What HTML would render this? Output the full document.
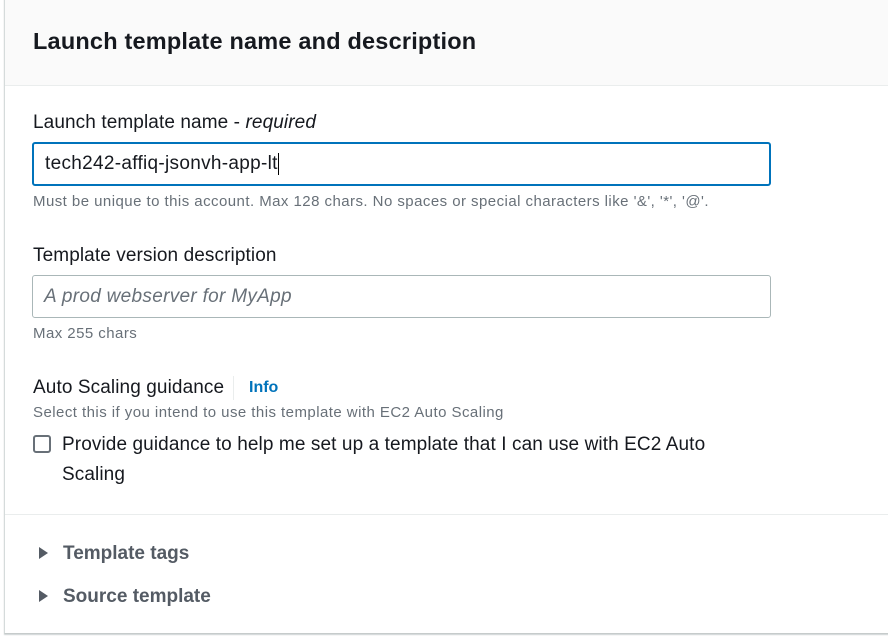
<!DOCTYPE html>
<html><head><style>
*{margin:0;padding:0;box-sizing:border-box}
body{width:888px;height:637px;background:#fff;font-family:"Liberation Sans",sans-serif;color:#16191f;position:relative;overflow:hidden}
.card{position:absolute;left:4px;top:-2px;width:890px;height:636px;border-left:1px solid #d5dbdb;border-bottom:1px solid #c6cbcb;box-shadow:0 1px 1px rgba(0,28,36,.2)}
.hdr{position:absolute;left:0;top:0;width:100%;height:88px;background:#fafafa;border-bottom:1px solid #eaeded}
.a{position:absolute;white-space:nowrap}
h1{position:absolute;left:28px;top:30px;font-size:23.5px;font-weight:bold;letter-spacing:.2px}
.lbl{font-size:19px;letter-spacing:.1px}
.help{font-size:15px;color:#687078;letter-spacing:.45px}
.inp{position:absolute;left:32px;width:739px;border-radius:3px;font-size:19px;letter-spacing:.3px;padding-left:11px}
.tri{position:absolute;width:0;height:0;border-top:6px solid transparent;border-bottom:6px solid transparent;border-left:9px solid #545b64}
.exp{font-size:19px;font-weight:bold;color:#545b64}
</style></head><body>
<div class="card">
<div class="hdr"><h1>Launch template name and description</h1></div>
<div class="a" style="left:0;top:516px;width:100%;border-top:1px solid #eaeded"></div>
</div>
<div class="a lbl" style="left:33px;top:112px">Launch template name - <i>required</i></div>
<div class="inp" style="top:142px;height:44px;border:2px solid #0073bb;line-height:40px">tech242-affiq-jsonvh-app-lt<span style="display:inline-block;width:1px;height:22px;background:#000;vertical-align:middle"></span></div>
<div class="a help" style="left:33px;top:193px">Must be unique to this account. Max 128 chars. No spaces or special characters like '&amp;', '*', '@'.</div>
<div class="a lbl" style="left:33px;top:245px">Template version description</div>
<div class="inp" style="top:275px;height:43px;border:1px solid #aab7b8;line-height:41px;color:#687078;font-style:italic">A prod webserver for MyApp</div>
<div class="a help" style="left:33px;top:325px">Max 255 chars</div>
<div class="a lbl" style="left:33px;top:377px">Auto Scaling guidance</div>
<div class="a" style="left:233px;top:376px;width:1px;height:24px;background:#eaeded"></div>
<div class="a" style="left:249px;top:379px;font-size:16px;font-weight:bold;color:#0073bb">Info</div>
<div class="a help" style="left:33px;top:404px">Select this if you intend to use this template with EC2 Auto Scaling</div>
<div class="a" style="left:33px;top:435px;width:18px;height:18px;border:2px solid #687078;border-radius:3px"></div>
<div class="a lbl" style="left:62px;top:430px;line-height:30px;white-space:normal;width:660px">Provide guidance to help me set up a template that I can use with EC2 Auto Scaling</div>
<div class="tri" style="left:39px;top:547px"></div>
<div class="a exp" style="left:63px;top:543px">Template tags</div>
<div class="tri" style="left:39px;top:590px"></div>
<div class="a exp" style="left:63px;top:586px">Source template</div>
</body></html>
